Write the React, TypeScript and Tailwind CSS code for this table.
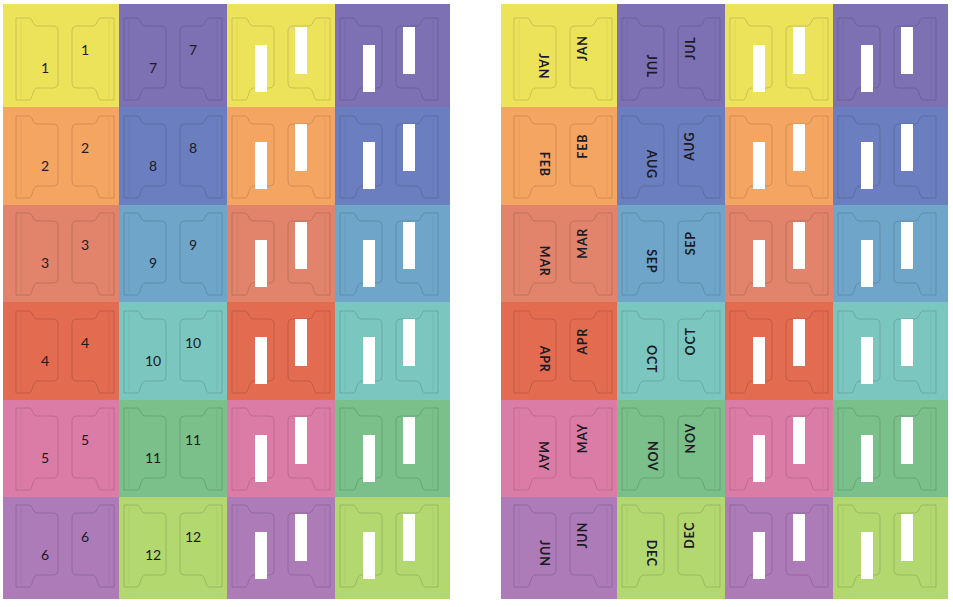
import React from "react";

const colA = ["bg-[#ece35b]", "bg-[#f4a562]", "bg-[#e1846b]", "bg-[#e26b50]", "bg-[#db7ca6]", "bg-[#ac7bb8]"];
const colB = ["bg-[#7d71b4]", "bg-[#6b7fc0]", "bg-[#6ea5c9]", "bg-[#7bc6bf]", "bg-[#7bbf8a]", "bg-[#b4d870]"];

const months = ["JAN", "FEB", "MAR", "APR", "MAY", "JUN", "JUL", "AUG", "SEP", "OCT", "NOV", "DEC"];

const justify = ["justify-end", "justify-center", "justify-center", "justify-start"];
const align = ["items-end", "items-center", "items-center", "items-center", "items-center", "items-start"];

const SHAPE =
  "M5 8 H18 C22 8 21 16 26.5 16 H42 Q47 16 47 21 V73 Q47 78 42 78 H26.5 C21 78 22 90 18 90 H5 Z";

function Tabs() {
  return (
    <svg className="absolute inset-0" width="108" height="97" viewBox="0 0 108 97">
      <g fill="none" stroke="rgba(0,0,0,0.24)" strokeWidth="0.6">
        <path d={SHAPE} />
        <line x1="10" y1="10" x2="10" y2="88" stroke="rgba(0,0,0,0.1)" />
        <g transform="translate(108 0) scale(-1 1)">
          <path d={SHAPE} />
          <line x1="10" y1="10" x2="10" y2="88" stroke="rgba(0,0,0,0.1)" />
        </g>
      </g>
    </svg>
  );
}

type Kind = "num" | "month" | "blank";

function Slot({ side, kind, label }: { side: "l" | "r"; kind: Kind; label: string }) {
  const pad =
    kind === "month"
      ? side === "l"
        ? "pt-[16px]"
        : "pb-[20px]"
      : side === "l"
      ? "pt-[19px]"
      : "pb-[17px]";
  let inner: React.ReactNode;
  if (kind === "blank") {
    inner = <div className="w-3 h-[47px] bg-white" />;
  } else if (kind === "num") {
    inner = <span className="text-[14px] leading-none text-[#1c1a22]">{label}</span>;
  } else {
    inner = (
      <span
        className={`block text-[12.5px] font-bold tracking-[0.8px] leading-none text-[#1c1a22] whitespace-nowrap ${
          side === "l" ? "rotate-90" : "-rotate-90"
        }`}
      >
        {label}
      </span>
    );
  }
  return <div className={`w-[28px] h-full flex items-center justify-center ${pad}`}>{inner}</div>;
}

function Panel({ mode }: { mode: "num" | "month" }) {
  const cells: React.ReactNode[] = [];
  for (let r = 0; r < 6; r++) {
    for (let c = 0; c < 4; c++) {
      const bg = c % 2 === 0 ? colA[r] : colB[r];
      const idx = c === 1 ? r + 6 : r;
      const kind: Kind = c >= 2 ? "blank" : mode;
      const label = mode === "num" ? String(idx + 1) : months[idx];
      cells.push(
        <div key={`${r}-${c}`} className={`flex ${justify[c]} ${align[r]} ${bg}`}>
          <div className="relative w-[108px] h-[97px]">
            <Tabs />
            <div className="relative flex h-full pl-[20px] gap-[12px]">
              <Slot side="l" kind={kind} label={label} />
              <Slot side="r" kind={kind} label={label} />
            </div>
          </div>
        </div>
      );
    }
  }
  return (
    <div className="grid grid-cols-[116px_108px_108px_115px] grid-rows-[103px_98px_97px_98px_97px_102px]">
      {cells}
    </div>
  );
}

export default function App() {
  return (
    <div
      className="w-[953px] h-[607px] bg-white flex pt-[4px] pl-[3px] gap-[51px] overflow-hidden"
      style={{ fontFamily: "Lato, 'Open Sans', sans-serif" }}
    >
      <Panel mode="num" />
      <Panel mode="month" />
    </div>
  );
}
